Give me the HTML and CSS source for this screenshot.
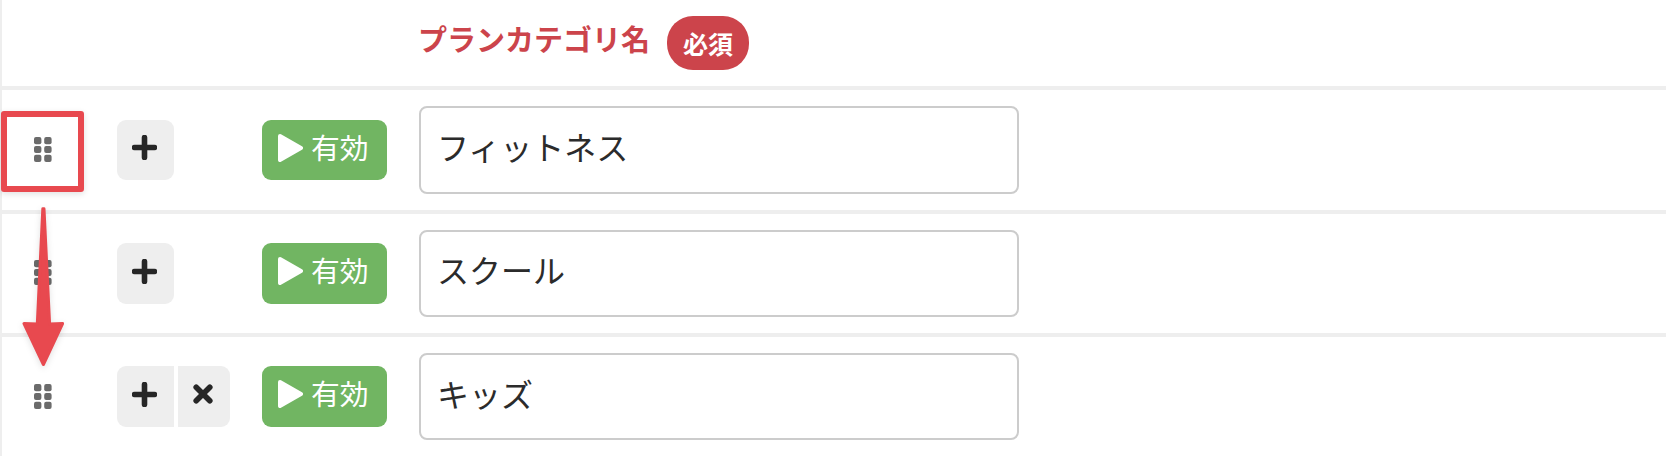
FILE: index.html
```html
<!DOCTYPE html>
<html lang="ja">
<head>
  <meta charset="UTF-8" />
  <title>プランカテゴリ</title>
  <link rel="stylesheet" href="styles.css">
</head>
<body>
  <svg width="0" height="0" class="defs">
    <symbol id="grip" viewBox="0 0 18 25">
      <rect x="0" y="0" width="7.4" height="7.2" rx="2" />
      <rect x="10.2" y="0" width="7.4" height="7.2" rx="2" />
      <rect x="0" y="8.9" width="7.4" height="7.2" rx="2" />
      <rect x="10.2" y="8.9" width="7.4" height="7.2" rx="2" />
      <rect x="0" y="17.8" width="7.4" height="7.2" rx="2" />
      <rect x="10.2" y="17.8" width="7.4" height="7.2" rx="2" />
    </symbol>
    <symbol id="plus" viewBox="0 0 25 25">
      <path d="M12.5 2.5v20M2.5 12.5h20" fill="none" stroke="currentColor" stroke-width="5.6" stroke-linecap="round" />
    </symbol>
    <symbol id="cross" viewBox="0 0 20 20">
      <path d="M3.2 3.2l13.6 13.6M16.8 3.2L3.2 16.8" fill="none" stroke="currentColor" stroke-width="5.6" stroke-linecap="round" />
    </symbol>
    <symbol id="play" viewBox="0 0 25 28">
      <path d="M2 2l21 12L2 26z" fill="currentColor" stroke="currentColor" stroke-width="4" stroke-linejoin="round" />
    </symbol>
  </svg>

  <div class="table">
    <div class="head-row">
      <span class="head-label">プランカテゴリ名</span>
      <span class="required">必須</span>
    </div>

    <div class="row">
      <div class="handle"><svg class="grip"><use href="#grip" /></svg></div>
      <div class="actions">
        <button class="icon-btn add"><svg class="plus"><use href="#plus" /></svg></button>
      </div>
      <button class="status"><svg class="play"><use href="#play" /></svg>有効</button>
      <input class="name" type="text" value="フィットネス" />
    </div>

    <div class="row">
      <div class="handle"><svg class="grip"><use href="#grip" /></svg></div>
      <div class="actions">
        <button class="icon-btn add"><svg class="plus"><use href="#plus" /></svg></button>
      </div>
      <button class="status"><svg class="play"><use href="#play" /></svg>有効</button>
      <input class="name" type="text" value="スクール" />
    </div>

    <div class="row">
      <div class="handle"><svg class="grip"><use href="#grip" /></svg></div>
      <div class="actions">
        <button class="icon-btn add joined"><svg class="plus"><use href="#plus" /></svg></button>
        <button class="icon-btn remove"><svg class="cross"><use href="#cross" /></svg></button>
      </div>
      <button class="status"><svg class="play"><use href="#play" /></svg>有効</button>
      <input class="name" type="text" value="キッズ" />
    </div>
  </div>

  <!-- 手順の注釈 -->
  <div class="note-box"></div>
  <svg class="note-arrow" width="70" height="170" viewBox="0 0 70 170">
    <path d="M42.8 1.8h1.2L49.6 117L62.6 116.5L43.4 157.5L24 116.5L37.3 117z" fill="#e8494f" stroke="#e8494f" stroke-width="3" stroke-linejoin="round" />
  </svg>
</body>
</html>
```

FILE: styles.css
```css
* {
  box-sizing: border-box;
}

body {
  margin: 0;
  height: 456px;
  overflow: hidden;
  background: #fff;
  font-family: "Noto Sans CJK JP", "Noto Sans", sans-serif;
  color: #2b2b2b;
}

.defs {
  position: absolute;
}

.table {
  border-left: 2px solid #eee;
  height: 456px;
}

.head-row {
  height: 90px;
  padding: 14px 0 0 416px;
  border-bottom: 4px solid #eee;
  display: flex;
  align-items: flex-start;
  gap: 17px;
}

.head-label {
  font-size: 29px;
  font-weight: 700;
  line-height: 48px;
  color: #cc444b;
  white-space: nowrap;
}

.required {
  width: 82px;
  height: 54px;
  margin-top: 2px;
  border-radius: 26px;
  background: #cc444b;
  color: #fff;
  font-size: 25px;
  font-weight: 700;
  line-height: 54px;
  display: flex;
  align-items: flex-start;
  justify-content: center;
}

.row {
  height: 123.5px;
  border-bottom: 4px solid #eee;
  display: flex;
  align-items: center;
}

.row:last-child {
  height: 119px;
  border-bottom: none;
}

.handle {
  width: 82px;
  display: flex;
  justify-content: center;
}

.grip {
  width: 18px;
  height: 25px;
  fill: #6b6b6b;
  margin-top: -1px;
}

.actions {
  width: 178px;
  padding-left: 33px;
  display: flex;
  gap: 4px;
}

button {
  border: none;
  padding: 0;
  font-family: inherit;
}

.icon-btn {
  height: 60.5px;
  background: #eee;
  border-radius: 9px;
  color: #262626;
  display: flex;
  align-items: center;
  justify-content: center;
}

.add {
  width: 57px;
}

.remove {
  width: 52px;
  border-radius: 0 9px 9px 0;
}

.joined {
  border-radius: 9px 0 0 9px;
}

.plus {
  width: 25px;
  height: 25px;
  margin: -4px 2px 0 0;
}

.cross {
  width: 20px;
  height: 20px;
  margin: -5px 2px 0 0;
}

.status {
  width: 125px;
  height: 60.5px;
  margin-right: 32px;
  background: #71b562;
  border-radius: 9px;
  color: #fff;
  font-size: 28.8px;
  font-weight: 400;
  line-height: 54px;
  display: flex;
  align-items: flex-start;
  gap: 8px;
  padding-left: 16px;
}

.play {
  width: 25px;
  height: 28px;
  margin-top: 14px;
}

.name {
  width: 600px;
  height: 87.5px;
  border: 2px solid #ccc;
  border-radius: 8px;
  padding: 0 16px 8px;
  font-family: inherit;
  font-size: 32px;
  color: #2b2b2b;
  background: #fff;
  outline: none;
}

.note-box {
  position: absolute;
  left: 1px;
  top: 111px;
  width: 83px;
  height: 81px;
  border: 6px solid #e8494f;
  border-radius: 3px;
  box-shadow: 0 2px 6px rgba(0, 0, 0, 0.12);
}

.note-arrow {
  position: absolute;
  left: 0;
  top: 207px;
  filter: drop-shadow(0 2px 3px rgba(0, 0, 0, 0.12));
}
```
